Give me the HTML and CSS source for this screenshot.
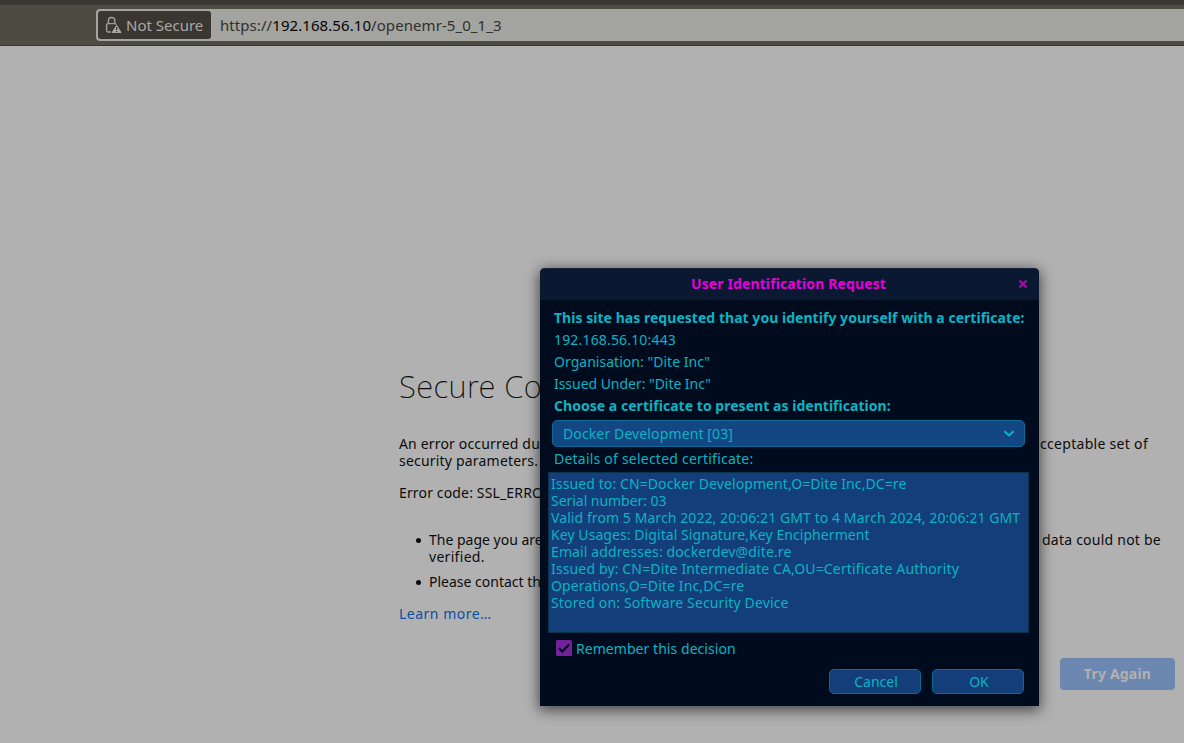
FILE: index.html
```html
<!DOCTYPE html>
<html lang="en">
<head>
<meta charset="utf-8">
<title>User Identification Request</title>
<link rel="stylesheet" href="styles.css">
</head>
<body>
<div class="toolbar">
  <div class="urlbar">
    <div class="identity">
      <svg class="lock" width="17" height="18" viewBox="0 0 17 18" fill="none">
        <path d="M6 16H3Q1.600 16 1.600 14.600V9Q1.600 7.600 3 7.600H9.600Q11 7.600 11.200 8.600M3.400 7.600V4.900Q3.400 1.500 6.600 1.500Q9.800 1.500 9.800 4.900V7.600" stroke="#a09f99" stroke-width="1.400"/>
        <path d="M11.600 9.300L16 16.500H7.200Z" fill="#a9a8a3" stroke="#a9a8a3" stroke-width="1" stroke-linejoin="round"/>
        <path d="M11.600 11V14M11.600 14.900V16" stroke="#3a3630" stroke-width="1.300"/>
      </svg>
      <span>Not Secure</span>
    </div>
    <div class="url"><span>https://</span><span class="host">192.168.56.10</span><span>/openemr-5_0_1_3</span></div>
  </div>
</div>
<main class="page">
  <h1 class="title">Secure Co</h1>
  <div class="line split first"><span class="start">An error occurred du</span><span class="end-a">cceptable set of</span></div>
  <div class="line params">security parameters.</div>
  <div class="line code">Error code: SSL_ERRO</div>
  <ul class="reasons">
    <li><div class="line split"><span class="start">The page you are</span><span class="end-b">data could not be</span></div><div class="line verified">verified.</div></li>
    <li><div class="line">Please contact th</div></li>
  </ul>
  <a class="learn">Learn more…</a>
  <div class="actions"><button class="again">Try Again</button></div>
</main>
<section class="dialog">
  <header class="dialog-head">
    <span class="dialog-title">User Identification Request</span>
    <svg class="close" width="10" height="10" viewBox="0 0 10 10"><path d="M1.500 1.500L8.500 8.500M8.500 1.500L1.500 8.500" stroke="#a80ca8" stroke-width="2.200"/></svg>
  </header>
  <div class="intro">
    <div class="row strong">This site has requested that you identify yourself with a certificate:</div>
    <div class="row address">192.168.56.10:443</div>
    <div class="row organisation">Organisation: "Dite Inc"</div>
    <div class="row issuer">Issued Under: "Dite Inc"</div>
    <div class="row strong">Choose a certificate to present as identification:</div>
  </div>
  <div class="select">
    <span>Docker Development [03]</span>
    <svg width="12" height="8" viewBox="0 0 12 8" fill="none"><path d="M1.500 1.200L6 5.400L10.500 1.200" stroke="#0cb6c6" stroke-width="2"/></svg>
  </div>
  <div class="details-label">Details of selected certificate:</div>
  <div class="details">
    <div class="subject">Issued to: CN=Docker Development,O=Dite Inc,DC=re</div>
    <div class="serial">Serial number: 03</div>
    <div class="validity">Valid from 5 March 2022, 20:06:21 GMT to 4 March 2024, 20:06:21 GMT</div>
    <div class="usages">Key Usages: Digital Signature,Key Encipherment</div>
    <div class="email">Email addresses: dockerdev@dite.re</div>
    <div class="authority">Issued by: CN=Dite Intermediate CA,OU=Certificate Authority</div>
    <div class="email">Operations,O=Dite Inc,DC=re</div>
    <div class="authority">Stored on: Software Security Device</div>
  </div>
  <div class="remember">
    <svg width="16" height="16" viewBox="0 0 16 16" fill="none"><rect width="16" height="16" rx="1.500" fill="#74209b"/><path d="M3 8.300L6.300 11.500L13.200 4.500" stroke="#000b1e" stroke-width="2"/></svg>
    <span>Remember this decision</span>
  </div>
  <div class="buttons"><button class="btn">Cancel</button><button class="btn">OK</button></div>
</section>
</body>
</html>
```
FILE: styles.css
```css
* { box-sizing: border-box; }
body {
  margin: 0;
  width: 1184px;
  height: 743px;
  overflow: hidden;
  background: #b1b1b1;
  color: #0c0c0d;
  font: 14px/17px "Noto Sans", sans-serif;
  white-space: nowrap;
}
.toolbar {
  height: 46px;
  padding: 4px 0 0 96px;
  background: #4e4b43;
  border-top: 5px solid #3a3630;
  border-bottom: 1px solid #3a3730;
  font-size: 15px;
}
.urlbar {
  display: flex;
  align-items: center;
  height: 32px;
  padding: 2px;
  background: #a3a39f;
  border-radius: 4px 0 0 4px;
}
.identity {
  display: flex;
  align-items: center;
  width: 113px;
  height: 28px;
  padding-left: 7px;
  gap: 4px;
  border-radius: 3px;
  background: #3a3630;
  color: #aaa9a5;
}
.lock { flex: none; }
.url { padding-left: 9px; color: #30302e; letter-spacing: .07px; }
.host { color: #050505; }
.page { padding: 320px 0 0 399px; }
.title { margin: 0; font-size: 31px; line-height: 40px; font-weight: 200; letter-spacing: .35px; }
.line { height: 17px; }
.first { margin-top: 29px; letter-spacing: .17px; }
.split { display: flex; }
.first .start { width: 641px; }
.end-a { letter-spacing: .3px; }
.params { letter-spacing: .2px; }
.reasons .start { width: 613px; }
.end-b { letter-spacing: .23px; }
.verified { letter-spacing: .3px; }
.code { margin-top: 15px; letter-spacing: .15px; }
.reasons { margin: 30px 0 0; padding: 0 0 0 30px; list-style: none; }
.reasons li { position: relative; margin-bottom: 8px; }
.reasons li::before {
  content: "";
  position: absolute;
  left: -13px;
  top: 7px;
  width: 5px;
  height: 5px;
  border-radius: 50%;
  background: #0c0c0d;
}
.learn { display: block; margin-top: 15px; color: #0b4ea5; letter-spacing: .5px; }
.actions { display: flex; margin: 36px 0 0 661px; }
.again {
  width: 115px;
  height: 32px;
  padding: 0 0 2px;
  border: 0;
  border-radius: 4px;
  background: #6c87b0;
  color: #b1b1b1;
  font: 700 14px "Noto Sans", sans-serif;
  letter-spacing: .2px;
}
.dialog {
  position: absolute;
  left: 540px;
  top: 268px;
  width: 499px;
  height: 438px;
  border-radius: 5px 5px 0 0;
  background: #000b1d;
  color: #0bb3c3;
  box-shadow: 0 3px 14px 1px rgba(0, 0, 0, .62);
}
.dialog-head {
  display: grid;
  grid-template-columns: 1fr auto 1fr;
  align-items: center;
  height: 32px;
  padding: 0 11px 1px 9px;
  border-radius: 5px 5px 0 0;
  border-top: 1px solid #17263e;
  background: #0a1931;
  color: #e500dc;
  font-weight: 700;
}
.dialog-title { grid-column: 2; padding-bottom: 2px; letter-spacing: .12px; }
.close { justify-self: end; }
.intro { padding: 7px 14px 0; }
.row { height: 22px; line-height: 22px; }
.strong { font-weight: 700; letter-spacing: .035px; }
.address { letter-spacing: .17px; }
.organisation { letter-spacing: .03px; }
.issuer { letter-spacing: -.04px; }
.select {
  display: flex;
  align-items: center;
  justify-content: space-between;
  height: 27px;
  margin: 3px 14px 0 12px;
  padding: 0 9px 0 10px;
  border: 1px solid #096b98;
  border-radius: 5px;
  background: #134783;
  letter-spacing: .12px;
}
.details-label { height: 25px; padding: 3px 14px 0; letter-spacing: .22px; }
.details {
  width: 481px;
  height: 161px;
  margin-left: 8px;
  padding: 2px;
  border: 1px solid #07334b;
  background: #133e7a;
}
.subject { letter-spacing: .1px; }
.serial { letter-spacing: -.04px; }
.validity { letter-spacing: .08px; }
.usages { letter-spacing: .07px; }
.email { letter-spacing: .12px; }
.authority { letter-spacing: .14px; }
.remember { display: flex; align-items: center; gap: 4px; height: 16px; margin: 7px 0 0 16px; letter-spacing: .05px; }
.buttons { display: flex; gap: 11px; margin: 13px 0 0 289px; }
.btn {
  width: 92px;
  height: 25px;
  padding: 0 0 0 2px;
  border: 1px solid #096b98;
  border-radius: 5px;
  background: #133e7a;
  color: #0bb3c3;
  font: 14px "Noto Sans", sans-serif;
}
```
